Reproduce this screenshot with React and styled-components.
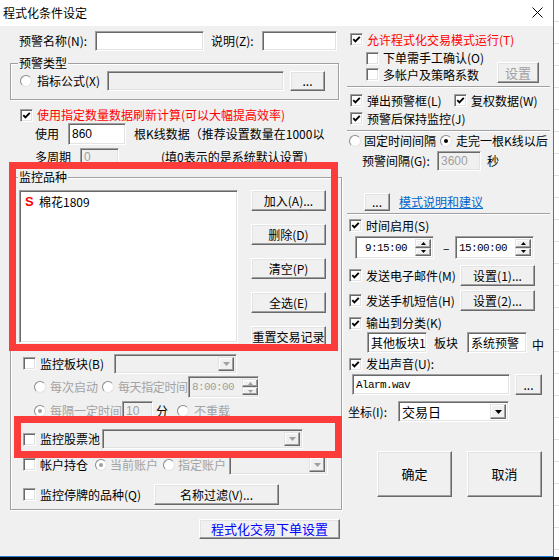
import React from 'react';
import styled, { createGlobalStyle } from 'styled-components';

const GlobalStyle = createGlobalStyle`
  html, body { margin: 0; padding: 0; background: #000; }
  body {
    width: 559px; height: 560px; overflow: hidden;
    font-family: "Noto Sans CJK SC", "Noto Sans", sans-serif;
    font-size: 12px; color: #000;
  }
`;

const Screen = styled.div`
  display: grid;
  grid-template-columns: 554px 5px;
  grid-template-rows: 557px 3px;
  width: 559px;
  height: 560px;
`;

const BackApp = styled.div`
  background: repeating-linear-gradient(to bottom, #fff 0 21px, #e2e2e2 21px 22px);
`;

const Taskbar = styled.div`
  grid-column: 1 / 3;
  background: #050505;
`;

const Window = styled.div`
  position: relative;
  box-sizing: border-box;
  background: #f0f0f0;
  border-right: 1px solid #2a7fd4;
  border-bottom: 1px solid #2a7fd4;
  display: flex;
  flex-direction: column;
`;

const TitleBar = styled.div`
  height: 24px;
  flex: none;
  background: #fff;
  display: flex;
  align-items: center;
  justify-content: space-between;
  padding: 0 10px 2px 3px;
  font-size: 12px;
`;

const Body = styled.div`
  display: flex;
  flex: 1;
`;

const LeftCol = styled.div`
  width: 345px;
  flex: none;
`;

const RightCol = styled.div`
  flex: 1;
`;

const Row = styled.div`
  display: flex;
  align-items: center;
  height: ${p => p.$h}px;
  margin-top: ${p => p.$mt || 0}px;
  padding-left: ${p => p.$pl || 0}px;
  padding-right: ${p => p.$pr || 0}px;
  justify-content: ${p => (p.$end ? 'flex-end' : 'flex-start')};
`;

const Label = styled.span`
  flex: none;
  white-space: nowrap;
  line-height: 16px;
  width: ${p => (p.$w ? `${p.$w}px` : 'auto')};
  margin-left: ${p => p.$ml || 0}px;
  align-self: ${p => (p.$low ? 'flex-end' : 'auto')};
  font-size: ${p => p.$size || 12}px;
  letter-spacing: ${p => (p.$tight ? '-0.4px' : 'normal')};
  color: ${p => (p.$tone === 'red' ? '#ff0000' : p.$tone === 'gray' ? '#a3a3a3' : '#000')};
`;

const Link = styled.span`
  margin-left: ${p => p.$ml || 0}px;
  color: #0066cc;
  text-decoration: underline;
  line-height: 16px;
  white-space: nowrap;
`;

const Sunken = styled.div`
  box-sizing: border-box;
  flex: none;
  width: ${p => p.$w}px;
  height: ${p => p.$h || 20}px;
  margin-left: ${p => p.$ml || 0}px;
  background: ${p => (p.$disabled ? '#f0f0f0' : '#fff')};
  border: 1px solid;
  border-color: #a0a0a0 #fff #fff #a0a0a0;
  box-shadow: inset 1px 1px 0 #696969, inset -1px -1px 0 #e3e3e3;
`;

const TextBox = styled(Sunken)`
  display: flex;
  align-items: center;
  padding: 0 3px;
  overflow: hidden;
  white-space: nowrap;
  color: ${p => (p.$disabled ? '#a0a0a0' : '#000')};
  font-family: ${p => (p.$mono ? '"Liberation Mono", monospace' : p.$latin ? '"Liberation Sans", sans-serif' : 'inherit')};
  font-size: ${p => (p.$mono ? 11 : 12)}px;
  letter-spacing: ${p => (p.$mono ? '-0.6px' : 'normal')};
`;

const Button = styled.div`
  box-sizing: border-box;
  flex: none;
  width: ${p => p.$w}px;
  height: ${p => p.$h || 21}px;
  margin-left: ${p => p.$ml || 0}px;
  margin-bottom: ${p => p.$lift || 0}px;
  background: #f0f0f0;
  border: 1px solid;
  border-color: #fff #696969 #696969 #fff;
  box-shadow: inset -1px -1px 0 #a0a0a0, inset 1px 1px 0 #e3e3e3;
  display: flex;
  align-items: center;
  justify-content: center;
  white-space: nowrap;
  line-height: 14px;
  color: ${p => (p.$tone === 'blue' ? '#0000ff' : p.$tone === 'gray' ? '#a0a0a0' : '#000')};
  font-size: ${p => p.$size || 12}px;
`;

const CheckBox = styled.span`
  box-sizing: border-box;
  flex: none;
  width: 13px;
  height: 13px;
  margin-left: ${p => p.$ml || 0}px;
  background: #fff;
  border: 1px solid;
  border-color: #a0a0a0 #fff #fff #a0a0a0;
  box-shadow: inset 1px 1px 0 #696969, inset -1px -1px 0 #e3e3e3;
  display: flex;
  align-items: center;
  justify-content: center;
`;

const RadioCircle = styled.span`
  box-sizing: border-box;
  flex: none;
  width: 12px;
  height: 12px;
  margin-left: ${p => p.$ml || 0}px;
  border-radius: 50%;
  border: 1px solid;
  border-color: #8a8a8a #e3e3e3 #e3e3e3 #8a8a8a;
  background: #fff;
  display: flex;
  align-items: center;
  justify-content: center;
  &::after {
    content: '';
    width: 4px;
    height: 4px;
    border-radius: 50%;
    background: ${p => (p.$disabled ? '#a0a0a0' : '#000')};
    display: ${p => (p.$on ? 'block' : 'none')};
  }
`;

const Group = styled.div`
  box-sizing: border-box;
  width: ${p => p.$w}px;
  margin: ${p => p.$mt}px 0 0 10px;
  padding-bottom: ${p => p.$pb}px;
  border: 1px solid #a0a0a0;
  box-shadow: inset 1px 1px 0 #fff, 1px 1px 0 #fff;
`;

const Legend = styled.div`
  width: fit-content;
  height: 14px;
  line-height: 14px;
  margin: -8px 0 0 7px;
  padding: 0 1px;
  background: #f0f0f0;
`;

const Separator = styled.div`
  height: 0;
  margin: ${p => p.$mt}px 3px 0 2px;
  border-top: 1px solid #a0a0a0;
  border-bottom: 1px solid #fff;
`;

const ListRow = styled.div`
  display: flex;
  height: 157px;
  margin-top: 6px;
  padding-left: 8px;
`;

const ListBox = styled(Sunken)`
  padding: 4px 5px;
`;

const ListItem = styled.div`
  display: flex;
  align-items: center;
  height: 14px;
  line-height: 14px;
`;

const Mark = styled.span`
  width: 14px;
  color: #ff0000;
  font-family: "Liberation Sans", sans-serif;
  font-weight: bold;
  font-size: 13px;
`;

const ButtonCol = styled.div`
  display: flex;
  flex-direction: column;
  justify-content: space-between;
  margin-left: 13px;
`;

const Field = styled(Sunken)`
  display: flex;
  align-items: stretch;
  padding: 2px;
`;

const FieldText = styled.div`
  flex: 1;
  display: flex;
  align-items: center;
  justify-content: ${p => (p.$right ? 'flex-end' : 'flex-start')};
  padding: 0 ${p => (p.$right ? 8 : 1)}px 0 1px;
  white-space: nowrap;
  color: ${p => (p.$disabled ? '#a0a0a0' : '#000')};
  font-family: ${p => (p.$mono ? '"Liberation Mono", monospace' : 'inherit')};
  font-size: ${p => (p.$mono ? 11 : 13)}px;
  letter-spacing: ${p => (p.$mono ? '-0.6px' : 'normal')};
`;

const SideButton = styled.div`
  box-sizing: border-box;
  width: 16px;
  flex: ${p => (p.$stack ? 1 : 'none')};
  background: #f0f0f0;
  border: 1px solid;
  border-color: #e3e3e3 #696969 #696969 #e3e3e3;
  box-shadow: inset -1px -1px 0 #a0a0a0, inset 1px 1px 0 #fff;
  display: flex;
  align-items: center;
  justify-content: center;
`;

const SpinStack = styled.div`
  display: flex;
  flex-direction: column;
`;

const Overlay = styled.div`
  position: absolute;
  box-sizing: border-box;
  left: ${p => p.$x}px;
  top: ${p => p.$y}px;
  width: ${p => p.$w}px;
  height: ${p => p.$h}px;
  border: 7px solid #fc3b3b;
  pointer-events: none;
`;

const Check = ({ on, ml }) => (
  <CheckBox $ml={ml}>
    {on && (
      <svg width="9" height="9" viewBox="0 0 9 9">
        <path d="M1.3 4.2L3.4 6.4L7.8 1.8" stroke="#000" strokeWidth="1.9" fill="none" />
      </svg>
    )}
  </CheckBox>
);

const Arrow = ({ up, color = '#000', w = 7 }) => (
  <svg width={w} height={Math.ceil(w / 2)} viewBox={`0 0 ${w} ${Math.ceil(w / 2)}`}>
    <path
      d={up ? `M0 ${Math.ceil(w / 2)}H${w}L${w / 2} 0z` : `M0 0H${w}L${w / 2} ${Math.ceil(w / 2)}z`}
      fill={color}
    />
  </svg>
);

const Combo = ({ w, h = 20, text, disabled, ml }) => (
  <Field $w={w} $h={h} $ml={ml} $disabled={disabled}>
    <FieldText $disabled={disabled}>{text}</FieldText>
    <SideButton>
      <Arrow color={disabled ? '#a0a0a0' : '#000'} />
    </SideButton>
  </Field>
);

const Spinner = ({ w, h, text, disabled, ml }) => (
  <Field $w={w} $h={h} $ml={ml} $disabled={disabled}>
    <FieldText $mono $right $disabled={disabled}>{text}</FieldText>
    <SpinStack>
      <SideButton $stack>
        <Arrow up w={5} color={disabled ? '#a0a0a0' : '#000'} />
      </SideButton>
      <SideButton $stack>
        <Arrow w={5} color={disabled ? '#a0a0a0' : '#000'} />
      </SideButton>
    </SpinStack>
  </Field>
);

export default function App() {
  return (
    <Screen>
      <GlobalStyle />
      <Window>
        <TitleBar>
          <span>程式化条件设定</span>
          <svg width="11" height="11" viewBox="0 0 11 11">
            <path d="M0.5 0.5L10.5 10.5M10.5 0.5L0.5 10.5" stroke="#000" strokeWidth="1" />
          </svg>
        </TitleBar>
        <Body>
          <LeftCol>
            <Row $h={20} $mt={5} $pl={19}>
              <Label $w={76}>预警名称(N):</Label>
              <TextBox $w={109} />
              <Label $w={51} $ml={7}>说明(Z):</Label>
              <TextBox $w={75} />
            </Row>

            <Group $w={329} $mt={12} $pb={8}>
              <Legend>预警类型</Legend>
              <Row $h={21} $pl={9}>
                <RadioCircle />
                <Label $w={70} $ml={5}>指标公式(X)</Label>
                <TextBox $w={177} $disabled />
                <Button $w={35} $h={20} $ml={6}>...</Button>
              </Row>
            </Group>

            <Row $h={16} $mt={7} $pl={20}>
              <Check on />
              <Label $ml={4} $tone="red">使用指定数量数据刷新计算(可以大幅提高效率)</Label>
            </Row>
            <Row $h={22} $pl={35}>
              <Label $w={33}>使用</Label>
              <TextBox $w={58} $h={22} $latin>860</TextBox>
              <Label $ml={8}>根K线数据（推荐设置数量在1000以</Label>
            </Row>
            <Row $h={20} $mt={2} $pl={35}>
              <Label $w={45}>多周期</Label>
              <TextBox $w={39} $h={19} $disabled $latin>0</TextBox>
              <Label $ml={42}>(填0表示的是系统默认设置)</Label>
            </Row>

            <Group $w={332} $mt={10} $pb={4}>
              <Legend>监控品种</Legend>
              <ListRow>
                <ListBox $w={219} $h={153}>
                  <ListItem>
                    <Mark>S</Mark>
                    <span>棉花1809</span>
                  </ListItem>
                </ListBox>
                <ButtonCol>
                  <Button $w={75}>加入(A)...</Button>
                  <Button $w={75}>删除(D)</Button>
                  <Button $w={75}>清空(P)</Button>
                  <Button $w={75}>全选(E)</Button>
                  <Button $w={75}>重置交易记录</Button>
                </ButtonCol>
              </ListRow>

              <Row $h={21} $mt={6} $pl={12}>
                <Check />
                <Label $w={74} $ml={4}>监控板块(B)</Label>
                <Combo w={123} disabled />
              </Row>
              <Row $h={22} $mt={2} $pl={23}>
                <RadioCircle $disabled />
                <Label $w={48} $ml={4} $tone="gray">每次启动</Label>
                <RadioCircle $ml={4} $disabled />
                <Label $w={70} $ml={4} $tone="gray" $tight>每天指定时间</Label>
                <Spinner w={71} h={22} text="8:00:00" disabled />
              </Row>
              <Row $h={19} $mt={3} $pl={23}>
                <RadioCircle $on $disabled />
                <Label $w={72} $ml={4} $tone="gray">每隔一定时间</Label>
                <TextBox $w={31} $h={19} $disabled $latin>10</TextBox>
                <Label $w={12} $ml={3}>分</Label>
                <RadioCircle $ml={9} $disabled />
                <Label $ml={5} $tone="gray">不重载</Label>
              </Row>
              <Row $h={20} $mt={9} $pl={12}>
                <Check />
                <Label $w={62} $ml={4}>监控股票池</Label>
                <Combo w={201} disabled />
              </Row>
              <Row $h={21} $mt={5} $pl={12}>
                <Check />
                <Label $w={51} $ml={4}>帐户持仓</Label>
                <RadioCircle $ml={4} $on $disabled />
                <Label $w={50} $ml={3} $tone="gray">当前账户</Label>
                <RadioCircle $ml={3} $disabled />
                <Label $w={51} $ml={3} $tone="gray">指定账户</Label>
                <Combo w={99} h={21} disabled />
              </Row>
              <Row $h={21} $mt={9} $pl={12}>
                <Check />
                <Label $w={114} $ml={4}>监控停牌的品种(Q)</Label>
                <Button $w={125}>名称过滤(V)...</Button>
              </Row>
            </Group>

            <Row $h={20} $mt={9} $pr={5} $end>
              <Button $w={141} $h={20} $tone="blue" $size={13}>程式化交易下单设置</Button>
            </Row>
          </LeftCol>

          <RightCol>
            <Row $h={17} $mt={5} $pl={5}>
              <Check on />
              <Label $ml={4} $tone="red">允许程式化交易模式运行(T)</Label>
            </Row>
            <Row $h={16} $mt={2} $pl={21}>
              <Check />
              <Label $ml={4}>下单需手工确认(O)</Label>
            </Row>
            <Row $h={17} $pl={21}>
              <Check />
              <Label $w={96} $ml={4}>多帐户及策略系数</Label>
              <Button $w={42} $ml={18} $lift={4} $tone="gray" $size={13}>设置</Button>
            </Row>
            <Separator $mt={3} />
            <Row $h={17} $mt={4} $pl={5}>
              <Check on />
              <Label $w={87} $ml={4}>弹出预警框(L)</Label>
              <Check on />
              <Label $ml={4}>复权数据(W)</Label>
            </Row>
            <Row $h={17} $mt={1} $pl={5}>
              <Check on />
              <Label $ml={4}>预警后保持监控(J)</Label>
            </Row>
            <Separator $mt={3} />
            <Row $h={16} $mt={1} $pl={4}>
              <RadioCircle />
              <Label $w={76} $ml={3}>固定时间间隔</Label>
              <RadioCircle $on />
              <Label $ml={4}>走完一根K线以后</Label>
            </Row>
            <Row $h={20} $mt={2} $pl={17}>
              <Label $w={75}>预警间隔(G):</Label>
              <TextBox $w={44} $disabled $latin>3600</TextBox>
              <Label $ml={6}>秒</Label>
            </Row>
            <Row $h={18} $mt={22} $pl={19}>
              <Button $w={26} $h={18}>...</Button>
              <Link $ml={9}>模式说明和建议</Link>
            </Row>
            <Separator $mt={2} />
            <Row $h={17} $mt={2} $pl={4}>
              <Check on />
              <Label $ml={4}>时间启用(S)</Label>
            </Row>
            <Row $h={23} $mt={2} $pl={10}>
              <Spinner w={79} h={23} text="9:15:00" />
              <Label $w={6} $ml={9}>–</Label>
              <Spinner w={79} h={23} text="15:00:00" ml={6} />
            </Row>
            <Row $h={21} $mt={6} $pl={4}>
              <Check on />
              <Label $w={94} $ml={4}>发送电子邮件(M)</Label>
              <Button $w={75}>设置(1)...</Button>
            </Row>
            <Row $h={21} $mt={4} $pl={4}>
              <Check on />
              <Label $w={94} $ml={4}>发送手机短信(H)</Label>
              <Button $w={75}>设置(2)...</Button>
            </Row>
            <Row $h={16} $mt={4} $pl={4}>
              <Check on />
              <Label $ml={4}>输出到分类(K)</Label>
            </Row>
            <Row $h={21} $mt={1} $pl={22}>
              <TextBox $w={60} $h={21}>其他板块1</TextBox>
              <Label $w={33} $ml={7}>板块</Label>
              <TextBox $w={60} $h={21}>系统预警</TextBox>
              <Label $ml={5} $low>中</Label>
            </Row>
            <Row $h={16} $mt={3} $pl={4}>
              <Check on />
              <Label $ml={4}>发出声音(U):</Label>
            </Row>
            <Row $h={21} $mt={2} $pl={7}>
              <TextBox $w={158} $h={21} $mono>Alarm.wav</TextBox>
              <Button $w={27} $ml={5}>...</Button>
            </Row>
            <Row $h={21} $mt={6} $pl={3}>
              <Label $w={50}>坐标(I):</Label>
              <Combo w={111} h={21} text="交易日" />
            </Row>
            <Row $h={46} $mt={29} $pl={32}>
              <Button $w={75} $h={46} $size={13}>确定</Button>
              <Button $w={75} $h={46} $ml={15} $size={13}>取消</Button>
            </Row>
          </RightCol>
        </Body>
        <Overlay $x={9} $y={162} $w={329} $h={189} />
        <Overlay $x={14} $y={416} $w={328} $h={42} />
      </Window>
      <BackApp />
      <Taskbar />
    </Screen>
  );
}
